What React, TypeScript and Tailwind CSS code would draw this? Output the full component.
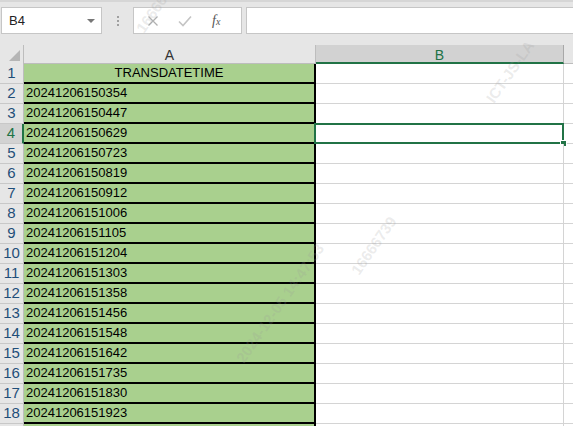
import React from 'react';

const values = [
  '20241206150354',
  '20241206150447',
  '20241206150629',
  '20241206150723',
  '20241206150819',
  '20241206150912',
  '20241206151006',
  '20241206151105',
  '20241206151204',
  '20241206151303',
  '20241206151358',
  '20241206151456',
  '20241206151548',
  '20241206151642',
  '20241206151735',
  '20241206151830',
  '20241206151923',
  '20241206152017',
];

function Toolbar() {
  return (
    <div className="h-[45px] bg-[#e6e6e6] border-t-2 border-[#d6d6d6] flex items-start pt-[5px]">
      <div className="ml-[1px] w-[101px] h-[27px] bg-white border border-[#c6c6c6] flex items-center justify-between pl-[7px] pr-[6px]">
        <span className="text-[13px] text-[#222]">B4</span>
        <span className="w-0 h-0 border-l-[4px] border-r-[4px] border-t-[4px] border-l-transparent border-r-transparent border-t-[#777]" />
      </div>
      <div className="w-[31px] h-[27px] flex flex-col items-center justify-center gap-[2px]">
        <span className="w-[2px] h-[2px] bg-[#a0a0a0]" />
        <span className="w-[2px] h-[2px] bg-[#a0a0a0]" />
        <span className="w-[2px] h-[2px] bg-[#a0a0a0]" />
      </div>
      <div className="w-[109px] h-[27px] bg-white border border-[#c6c6c6] flex items-center pl-[13px]">
        <svg width="12" height="12" viewBox="0 0 12 12" className="mr-[19px]">
          <path d="M1.5 1.5 L10.5 10.5 M10.5 1.5 L1.5 10.5" stroke="#b0b0b0" strokeWidth="1.3" fill="none" />
        </svg>
        <svg width="14" height="12" viewBox="0 0 14 12">
          <path d="M1 6.5 L5 10.5 L13 1.5" stroke="#c4c4c4" strokeWidth="1.6" fill="none" />
        </svg>
        <span
          className="ml-[20px] text-[14px] italic text-[#555]"
          style={{ fontFamily: '"Liberation Serif", serif' }}
        >
          f<span className="text-[10px]">x</span>
        </span>
      </div>
      <div className="ml-[4px] flex-1 h-[27px] bg-white border border-[#c6c6c6] border-r-0" />
    </div>
  );
}

function HeaderRow() {
  return (
    <div className="flex h-[19px] bg-[#e6e6e6]">
      <div className="w-[24px] shrink-0 border-r border-[#bdbdbd] flex items-end justify-end pr-[3px] pb-[3px]">
        <svg width="11" height="11" viewBox="0 0 11 11">
          <path d="M11 0 L11 11 L0 11 Z" fill="#b5b5b5" />
        </svg>
      </div>
      <div className="w-[292px] shrink-0 border-r border-[#bdbdbd] border-b border-b-[#bdbdbd] flex items-center justify-center text-[14px] text-[#333] leading-none pt-[1px]">
        A
      </div>
      <div className="w-[248px] shrink-0 bg-[#d2d2d2] border-r border-[#a8a8a8] border-b-2 border-b-[#217346] flex items-center justify-center text-[14px] text-[#217346] leading-none pt-[2px]">
        B
      </div>
      <div className="flex-1 border-b border-[#bdbdbd]" />
    </div>
  );
}

function Row({ n, value }: { n: number; value: string }) {
  const selected = n === 4;
  const header = n === 1;
  return (
    <div className="flex h-[20px]">
      <div
        className={
          selected
            ? 'w-[24px] shrink-0 bg-[#d2d2d2] border-r-2 border-[#217346] border-b border-b-[#c8c8c8] flex items-center justify-center text-[15px] text-[#217346]'
            : 'w-[24px] shrink-0 bg-[#e6e6e6] border-r border-[#bdbdbd] border-b border-b-[#c8c8c8] flex items-center justify-center text-[15px] text-[#1f4e79]'
        }
      >
        {n}
      </div>
      <div
        className={
          header
            ? 'w-[292px] shrink-0 bg-[#a9d08e] border-r-2 border-b-2 border-black flex items-center justify-center text-[13px] text-black'
            : 'w-[292px] shrink-0 bg-[#a9d08e] border-r-2 border-b-2 border-black flex items-center pl-[2px] text-[13px] text-black'
        }
      >
        {value}
      </div>
      <div className="w-[248px] shrink-0 bg-white border-r border-b border-[#d4d4d4] relative">
        {selected && (
          <>
            <div className="absolute -left-[2px] -top-[1px] -right-[1px] -bottom-[1px] border-2 border-[#217346]" />
            <div className="absolute -right-[4px] -bottom-[4px] w-[7px] h-[7px] bg-[#217346] border border-white" />
          </>
        )}
      </div>
      <div className="flex-1 bg-white border-b border-[#d4d4d4]" />
    </div>
  );
}

const watermarks = [
  { text: '16666739', left: 140, top: 20 },
  { text: 'ICT-JS-LA', left: 490, top: 90 },
  { text: '16666739', left: 355, top: 262 },
  { text: '2024-12-05 14:47:53', left: 240, top: 350 },
];

export default function App() {
  return (
    <div
      className="w-[573px] h-[426px] overflow-hidden bg-white relative"
      style={{ fontFamily: '"Liberation Sans", Arial, sans-serif' }}
    >
      <Toolbar />
      <HeaderRow />
      {['TRANSDATETIME', ...values].map((v, i) => (
        <Row key={i} n={i + 1} value={v} />
      ))}
      {watermarks.map((w, i) => (
        <span
          key={i}
          className="absolute pointer-events-none text-[15px] font-bold text-[#9a9a9a]/20 -rotate-[55deg] whitespace-nowrap origin-left"
          style={{ left: w.left, top: w.top }}
        >
          {w.text}
        </span>
      ))}
    </div>
  );
}
